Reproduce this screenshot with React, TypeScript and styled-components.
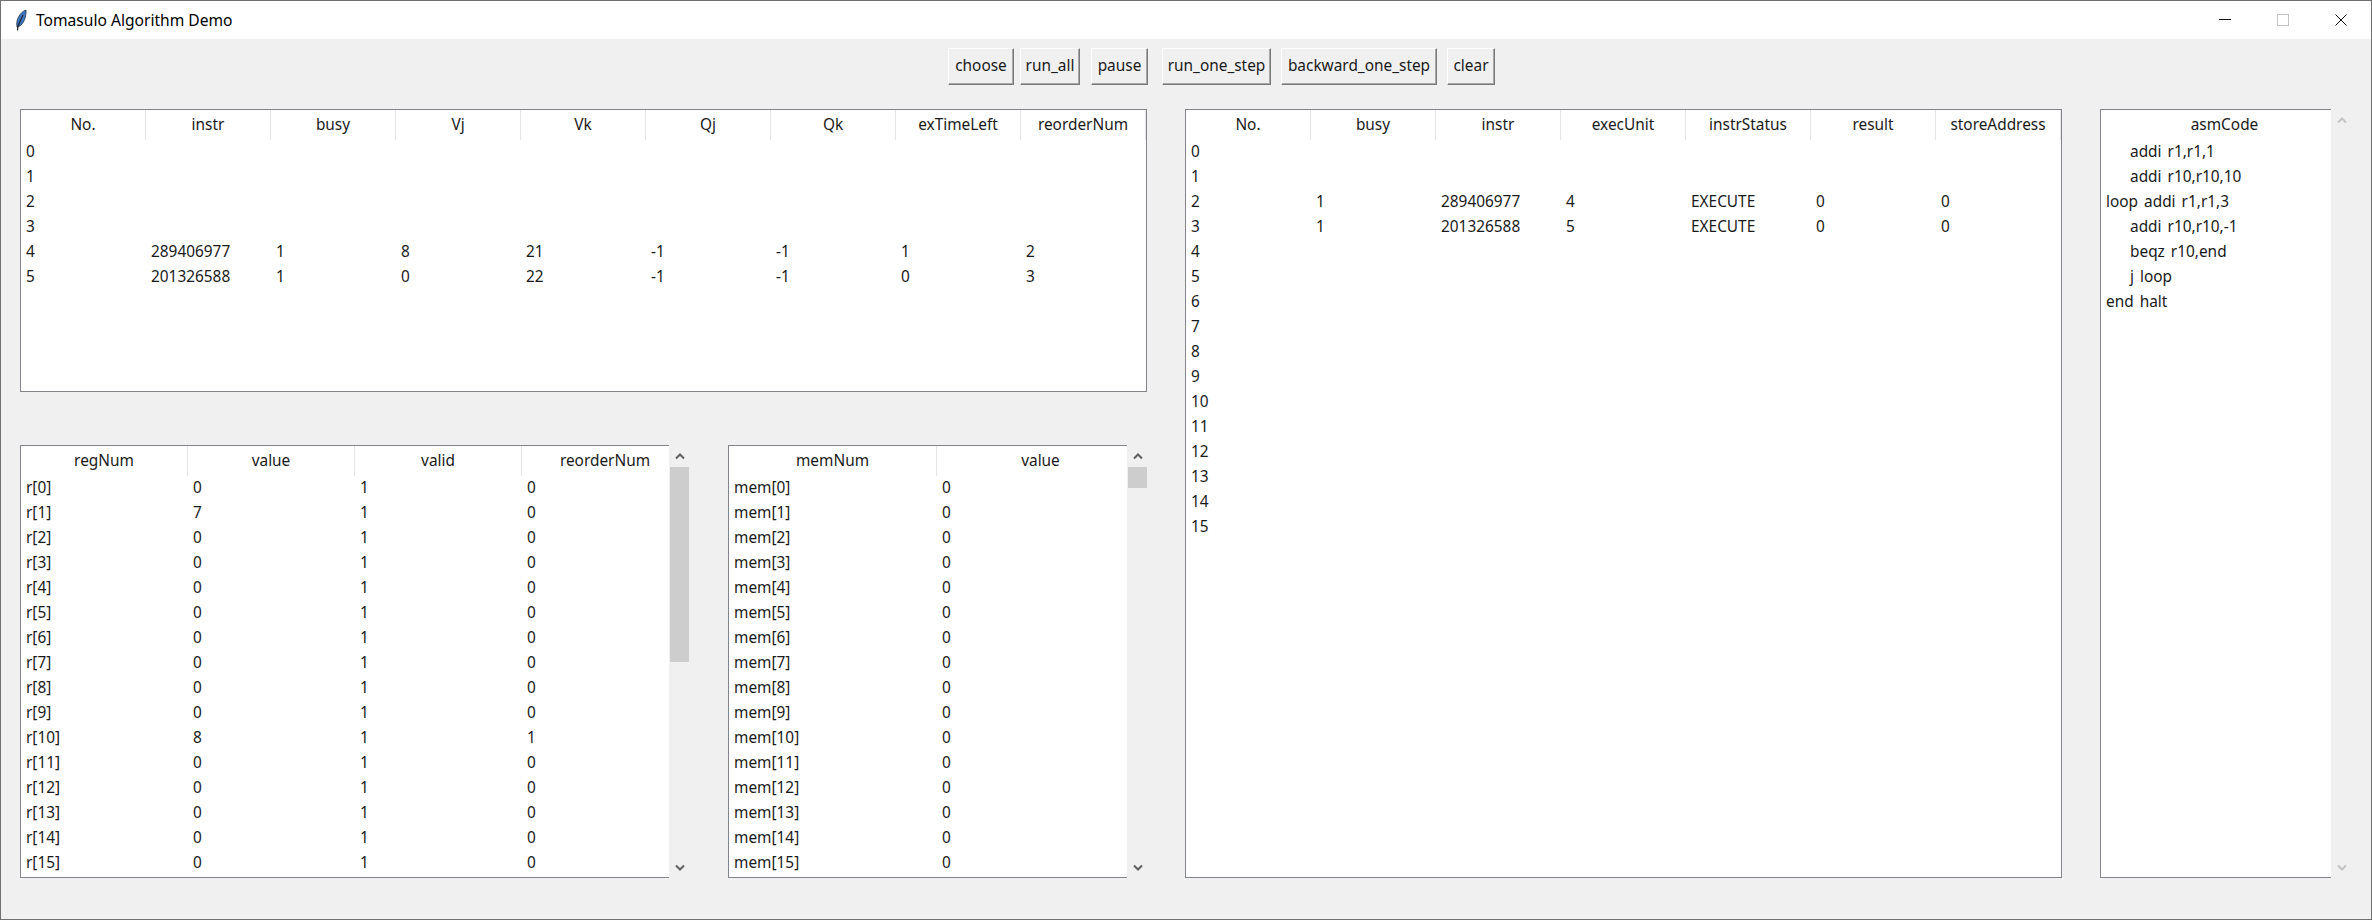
import React from "react"
import styled, { createGlobalStyle } from "styled-components"

const GlobalStyle = createGlobalStyle`
    html, body {
        margin: 0;
        padding: 0;
        background: #f0f0f0;
    }
    * {
        box-sizing: border-box;
    }
`

const Window = styled.div`
    width: 2372px;
    height: 920px;
    border: 1px solid #707070;
    background: #f0f0f0;
    display: flex;
    flex-direction: column;
    overflow: hidden;
    font-family: "Noto Sans", "Open Sans", sans-serif;
    font-size: 15.4px;
    color: #1a1a1a;
`

const TitleBar = styled.div`
    height: 38px;
    flex: none;
    background: #fff;
    display: flex;
    align-items: center;
    padding-left: 14px;
`

const TitleIcon = styled.svg`
    width: 12px;
    height: 22px;
    flex: none;
`

const TitleText = styled.span`
    margin-left: 9px;
    padding-bottom: 1px;
    font-size: 15.6px;
    color: #000;
`

const WindowControls = styled.div`
    margin-left: auto;
    display: flex;
    height: 100%;
    padding-right: 1px;
`

const WindowControl = styled.div`
    width: 58px;
    display: flex;
    align-items: center;
    justify-content: center;
`

const Toolbar = styled.div`
    height: 37px;
    flex: none;
    margin-top: 9px;
    padding-left: 947px;
    display: flex;
`

const ToolButton = styled.button<{ $width: number; $gap: number }>`
    width: ${props => props.$width}px;
    margin-left: ${props => props.$gap}px;
    height: 37px;
    padding: 0 0 3px;
    background: #f0f0f0;
    border: 1px solid;
    border-color: #fff #7a7a7a #7a7a7a #fff;
    box-shadow: inset -1px -1px 0 #a8a8a8;
    font-family: inherit;
    font-size: 15.4px;
    color: #1a1a1a;
`

const Workspace = styled.div`
    display: flex;
    margin-top: 24px;
    padding-left: 19px;
`

const LeftColumn = styled.div`
    width: 1127px;
    flex: none;
    display: flex;
    flex-direction: column;
    gap: 53px;
`

const LowerRow = styled.div`
    display: flex;
    gap: 39px;
`

const ScrolledPane = styled.div`
    display: flex;
`

const Table = styled.div<{ $width: number; $height: number; $open?: boolean }>`
    width: ${props => props.$width}px;
    height: ${props => props.$height}px;
    background: #fff;
    overflow: hidden;
    flex: none;
    border: 1px solid #82868c;
    border-right-width: ${props => (props.$open ? 0 : 1)}px;
`

const HeaderRow = styled.div`
    display: flex;
    height: 30px;
`

const HeaderCell = styled.div<{ $width: number }>`
    width: ${props => props.$width}px;
    flex: none;
    padding-bottom: 2px;
    display: flex;
    align-items: center;
    justify-content: center;
    border-right: 1px solid #e5e5e5;
`

const Row = styled.div`
    display: flex;
    height: 25px;
    padding-bottom: 3px;
    align-items: center;
    white-space: pre;
    word-spacing: 2px;
`

const Cell = styled.div<{ $width: number }>`
    width: ${props => props.$width}px;
    flex: none;
    padding-left: 5px;
`

const Scrollbar = styled.div`
    width: 19px;
    margin-left: 1px;
    flex: none;
    display: flex;
    flex-direction: column;
`

const ArrowBox = styled.div`
    height: 22px;
    flex: none;
    display: flex;
    align-items: center;
    justify-content: center;
`

const Thumb = styled.div<{ $height: number }>`
    height: ${props => props.$height}px;
    background: #cdcdcd;
`

const ScrollSpacer = styled.div`
    flex: 1;
`

const CenterPane = styled.div`
    margin-left: 38px;
`

const AsmPane = styled.div`
    margin-left: 38px;
`

const Chevron = ({ up, dim }: { up?: boolean; dim?: boolean }) => (
    <svg width="10" height="7" viewBox="0 0 10 7">
        <path
            d={up ? "M1 5.5 L5 1.5 L9 5.5" : "M1 1.5 L5 5.5 L9 1.5"}
            fill="none"
            stroke={dim ? "#c4c4c4" : "#606060"}
            strokeWidth="2"
        />
    </svg>
)

const VScroll = ({ thumb, dim }: { thumb?: number; dim?: boolean }) => (
    <Scrollbar>
        <ArrowBox><Chevron up dim={dim} /></ArrowBox>
        {thumb ? <Thumb $height={thumb} /> : null}
        <ScrollSpacer />
        <ArrowBox><Chevron dim={dim} /></ArrowBox>
    </Scrollbar>
)

type GridProps = {
    width: number
    height: number
    colWidth: number
    columns: string[]
    rows: string[][]
    open?: boolean
}

const DataTable = ({ width, height, colWidth, columns, rows, open }: GridProps) => (
    <Table $width={width} $height={height} $open={open}>
        <HeaderRow>
            {columns.map(c => <HeaderCell key={c} $width={colWidth}>{c}</HeaderCell>)}
        </HeaderRow>
        {rows.map((r, i) => (
            <Row key={i}>
                {r.map((v, j) => <Cell key={j} $width={colWidth}>{v}</Cell>)}
            </Row>
        ))}
    </Table>
)

const buttons = [
    { label: "choose", width: 66, gap: 0 },
    { label: "run_all", width: 60, gap: 6 },
    { label: "pause", width: 57, gap: 11 },
    { label: "run_one_step", width: 109, gap: 14 },
    { label: "backward_one_step", width: 156, gap: 10 },
    { label: "clear", width: 48, gap: 10 },
]

const stationCols = ["No.", "instr", "busy", "Vj", "Vk", "Qj", "Qk", "exTimeLeft", "reorderNum"]
const stationRows = [
    ["0"], ["1"], ["2"], ["3"],
    ["4", "289406977", "1", "8", "21", "-1", "-1", "1", "2"],
    ["5", "201326588", "1", "0", "22", "-1", "-1", "0", "3"],
]

const robCols = ["No.", "busy", "instr", "execUnit", "instrStatus", "result", "storeAddress"]
const robRows = Array.from({ length: 16 }, (_, i) => {
    if (i === 2) return ["2", "1", "289406977", "4", "EXECUTE", "0", "0"]
    if (i === 3) return ["3", "1", "201326588", "5", "EXECUTE", "0", "0"]
    return [String(i)]
})

const regRows = Array.from({ length: 16 }, (_, i) => {
    const value = i === 1 ? "7" : i === 10 ? "8" : "0"
    return [`r[${i}]`, value, "1", i === 10 ? "1" : "0"]
})

const memRows = Array.from({ length: 16 }, (_, i) => [`mem[${i}]`, "0"])

const asmRows = [
    ["    addi r1,r1,1"],
    ["    addi r10,r10,10"],
    ["loop addi r1,r1,3"],
    ["    addi r10,r10,-1"],
    ["    beqz r10,end"],
    ["    j loop"],
    ["end halt"],
]

export default function App() {
    return (
        <Window>
            <GlobalStyle />
            <TitleBar>
                <TitleIcon viewBox="0 0 12 22">
                    <path d="M2 18 C0.5 11 5 3 11 1 C11.5 7 9 15 4 17.5 Z" fill="#3d78c4" stroke="#26323f" strokeWidth="0.8" />
                    <path d="M2.5 21.5 L3 17 L8 6" fill="none" stroke="#1c2530" strokeWidth="1.2" />
                </TitleIcon>
                <TitleText>Tomasulo Algorithm Demo</TitleText>
                <WindowControls>
                    <WindowControl>
                        <svg width="12" height="12" viewBox="0 0 12 12"><path d="M0 5.5 H12" stroke="#111" strokeWidth="1" /></svg>
                    </WindowControl>
                    <WindowControl>
                        <svg width="12" height="12" viewBox="0 0 12 12"><rect x="0.5" y="0.5" width="11" height="11" fill="none" stroke="#c4c4c4" /></svg>
                    </WindowControl>
                    <WindowControl>
                        <svg width="12" height="12" viewBox="0 0 12 12"><path d="M0.5 0.5 L11.5 11.5 M11.5 0.5 L0.5 11.5" stroke="#111" strokeWidth="1" /></svg>
                    </WindowControl>
                </WindowControls>
            </TitleBar>
            <Toolbar>
                {buttons.map(b => (
                    <ToolButton key={b.label} $width={b.width} $gap={b.gap}>{b.label}</ToolButton>
                ))}
            </Toolbar>
            <Workspace>
                <LeftColumn>
                    <DataTable width={1127} height={283} colWidth={125} columns={stationCols} rows={stationRows} />
                    <LowerRow>
                        <ScrolledPane>
                            <DataTable width={649} height={433} colWidth={167} columns={["regNum", "value", "valid", "reorderNum"]} rows={regRows} open />
                            <VScroll thumb={195} />
                        </ScrolledPane>
                        <ScrolledPane>
                            <DataTable width={399} height={433} colWidth={208} columns={["memNum", "value"]} rows={memRows} open />
                            <VScroll thumb={21} />
                        </ScrolledPane>
                    </LowerRow>
                </LeftColumn>
                <CenterPane>
                    <DataTable width={877} height={769} colWidth={125} columns={robCols} rows={robRows} />
                </CenterPane>
                <AsmPane>
                    <ScrolledPane>
                        <DataTable width={231} height={769} colWidth={248} columns={["asmCode"]} rows={asmRows} open />
                        <VScroll dim />
                    </ScrolledPane>
                </AsmPane>
            </Workspace>
        </Window>
    )
}
